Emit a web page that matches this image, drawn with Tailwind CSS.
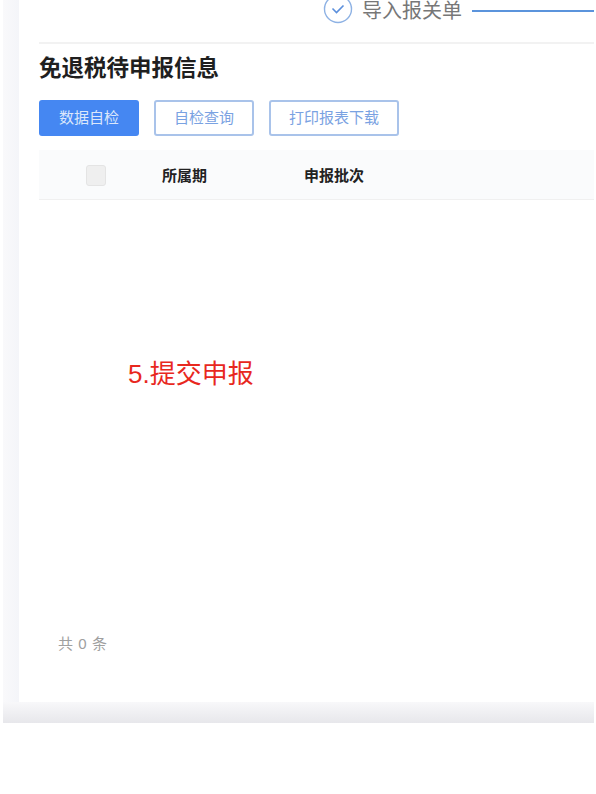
<!DOCTYPE html>
<html lang="zh-CN">
<head>
    <meta charset="UTF-8">
    <script src="https://cdn.jsdelivr.net/npm/@tailwindcss/browser@4"></script>
    <title>免退税待申报信息</title>
</head>
<body class="bg-white w-[596px] h-[794px] overflow-hidden font-['Liberation_Sans','Noto_Sans_CJK_SC',sans-serif]">
    <div class="w-[591px] h-[723px] ml-[3px] flex flex-col">
        <div class="flex flex-1 min-h-0">
            <!-- left gutter -->
            <div class="w-[16px] bg-gradient-to-r from-[#f9f9fb] to-[#f4f5f9]"></div>

            <div class="flex-1 min-w-0 pl-[20px] flex flex-col">
                <!-- steps -->
                <div class="h-[42px] border-b-2 border-[#f2f2f2] flex items-start pl-[284px] box-content overflow-hidden">
                    <div class="flex items-center gap-[10px] -mt-[2px]">
                        <svg class="w-[30px] h-[26px]" viewBox="0 0 30 26" fill="none">
                            <circle cx="15" cy="11" r="13.5" stroke="#8eb2e4" stroke-width="1.4"/>
                            <path d="M9.5 10.5 L13.5 14.5 L20.5 7.5" stroke="#5b8fdc" stroke-width="1.6"/>
                        </svg>
                        <span class="-ml-[1px] text-[20px] leading-[26px] text-[#777] whitespace-nowrap">导入报关单</span>
                        <div class="w-[122px] h-[2px] bg-[#5b94dc]"></div>
                    </div>
                </div>

                <h1 class="mt-[10px] text-[22.5px] leading-[30px] font-bold text-[#1f1f1f]">免退税待申报信息</h1>

                <!-- buttons -->
                <div class="mt-[16px] flex gap-[15px] text-[15px]">
                    <button class="w-[100px] h-[36px] rounded-[3px] bg-[#4587f2] text-[#dbe7fb]">数据自检</button>
                    <button class="w-[100px] h-[36px] rounded-[3px] border-2 border-[#a9c3ea] text-[#7aa2e2]">自检查询</button>
                    <button class="w-[130px] h-[36px] rounded-[3px] border-2 border-[#a9c3ea] text-[#7aa2e2]">打印报表下载</button>
                </div>

                <!-- table header -->
                <div class="mt-[14px] h-[50px] pt-[2px] bg-[#fafbfc] border-b border-[#f0f0f0] flex items-center text-[15px] font-bold text-[#222]">
                    <div class="ml-[47px] w-[20px] h-[21px] rounded-[3px] bg-[#efefef] border border-[#e4e4e4]"></div>
                    <span class="ml-[56px] mt-[1px]">所属期</span>
                    <span class="ml-[97px] mt-[1px]">申报批次</span>
                </div>

                <div class="mt-[156px] pl-[89px] text-[26px] leading-[36px] text-[#e8281e]">5.提交申报</div>

                <div class="mt-[242px] pl-[19px] text-[15px] leading-[20px] tracking-[0.6px] text-[#a0a0a0]">共 0 条</div>
            </div>
        </div>
        <!-- bottom shadow strip -->
        <div class="h-[21px] bg-gradient-to-b from-[#f8f8fa] to-[#e7e7eb]"></div>
    </div>
</body>
</html>
